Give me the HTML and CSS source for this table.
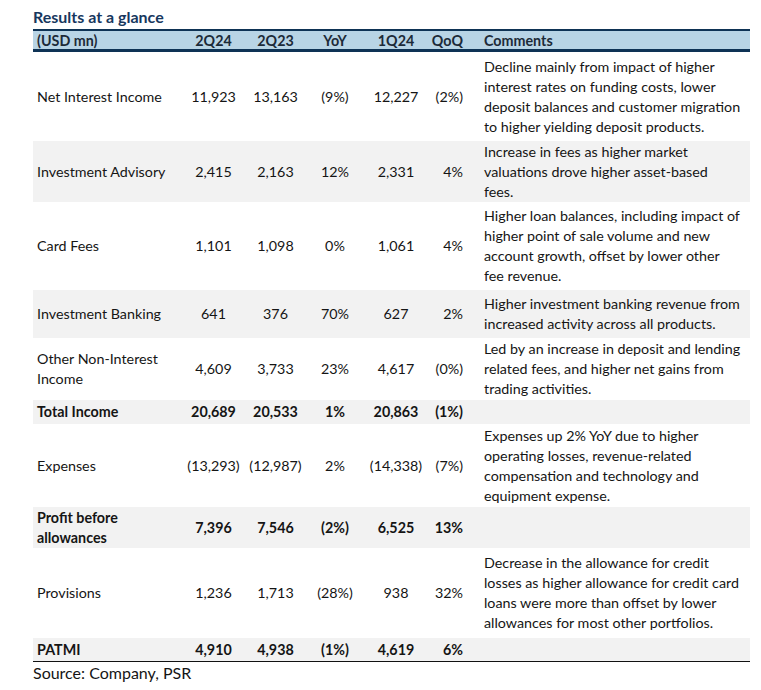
FILE: index.html
```html
<!DOCTYPE html>
<html lang="en">
<head>
<meta charset="utf-8">
<title>Results at a glance</title>
<link rel="stylesheet" href="styles.css">
</head>
<body>
<div class="wrap">
  <div class="title">Results at a glance</div>
  <table class="results">
    <colgroup>
      <col class="c-label"><col class="c-a"><col class="c-b"><col class="c-yoy"><col class="c-c"><col class="c-qoq"><col class="c-com">
    </colgroup>
    <thead>
      <tr>
        <th class="label">(USD mn)</th>
        <th class="num">2Q24</th>
        <th class="num">2Q23</th>
        <th class="num">YoY</th>
        <th class="num">1Q24</th>
        <th class="qoq">QoQ</th>
        <th class="com">Comments</th>
      </tr>
    </thead>
    <tbody>
      <tr class="h-nii">
        <td class="label">Net Interest Income</td>
        <td class="num">11,923</td><td class="num">13,163</td><td class="num">(9%)</td><td class="num">12,227</td><td class="qoq">(2%)</td>
        <td class="com">Decline mainly from impact of higher<br>interest rates on funding costs, lower<br>deposit balances and customer migration<br>to higher yielding deposit products.</td>
      </tr>
      <tr class="h-ia shade">
        <td class="label">Investment Advisory</td>
        <td class="num">2,415</td><td class="num">2,163</td><td class="num">12%</td><td class="num">2,331</td><td class="qoq">4%</td>
        <td class="com">Increase in fees as higher market<br>valuations drove higher asset-based<br>fees.</td>
      </tr>
      <tr class="h-cf">
        <td class="label">Card Fees</td>
        <td class="num">1,101</td><td class="num">1,098</td><td class="num">0%</td><td class="num">1,061</td><td class="qoq">4%</td>
        <td class="com">Higher loan balances, including impact of<br>higher point of sale volume and new<br>account growth, offset by lower other<br>fee revenue.</td>
      </tr>
      <tr class="h-ib shade">
        <td class="label">Investment Banking</td>
        <td class="num">641</td><td class="num">376</td><td class="num">70%</td><td class="num">627</td><td class="qoq">2%</td>
        <td class="com">Higher investment banking revenue from<br>increased activity across all products.</td>
      </tr>
      <tr class="h-oth">
        <td class="label">Other Non-Interest<br>Income</td>
        <td class="num">4,609</td><td class="num">3,733</td><td class="num">23%</td><td class="num">4,617</td><td class="qoq">(0%)</td>
        <td class="com">Led by an increase in deposit and lending<br>related fees, and higher net gains from<br>trading activities.</td>
      </tr>
      <tr class="h-tot shade bold">
        <td class="label">Total Income</td>
        <td class="num">20,689</td><td class="num">20,533</td><td class="num">1%</td><td class="num">20,863</td><td class="qoq">(1%)</td>
        <td class="com"></td>
      </tr>
      <tr class="h-exp">
        <td class="label">Expenses</td>
        <td class="num">(13,293)</td><td class="num">(12,987)</td><td class="num">2%</td><td class="num">(14,338)</td><td class="qoq">(7%)</td>
        <td class="com">Expenses up 2% YoY due to higher<br>operating losses, revenue-related<br>compensation and technology and<br>equipment expense.</td>
      </tr>
      <tr class="h-pba shade bold">
        <td class="label">Profit before<br>allowances</td>
        <td class="num">7,396</td><td class="num">7,546</td><td class="num">(2%)</td><td class="num">6,525</td><td class="qoq">13%</td>
        <td class="com"></td>
      </tr>
      <tr class="h-prov">
        <td class="label">Provisions</td>
        <td class="num">1,236</td><td class="num">1,713</td><td class="num">(28%)</td><td class="num">938</td><td class="qoq">32%</td>
        <td class="com">Decrease in the allowance for credit<br>losses as higher allowance for credit card<br>loans were more than offset by lower<br>allowances for most other portfolios.</td>
      </tr>
      <tr class="h-pat shade bold last">
        <td class="label">PATMI</td>
        <td class="num">4,910</td><td class="num">4,938</td><td class="num">(1%)</td><td class="num">4,619</td><td class="qoq">6%</td>
        <td class="com"></td>
      </tr>
    </tbody>
  </table>
  <div class="source">Source: Company, PSR</div>
</div>
</body>
</html>
```

FILE: styles.css
```css
html, body {
  margin: 0;
  padding: 0;
  background: #ffffff;
}

body {
  font-family: Lato, "Open Sans", "Liberation Sans", sans-serif;
  color: #151515;
  width: 761px;
  height: 690px;
  overflow: hidden;
}

.wrap {
  padding-left: 33px;
}

.title {
  padding-top: 6px;
  height: 22px;
  line-height: 22px;
  margin-bottom: 1px;
  font-size: 16px;
  font-weight: 700;
  color: #17375e;
}

.results {
  border-collapse: collapse;
  table-layout: fixed;
  width: 717px;
  font-size: 14.3px;
}

.c-label { width: 152px; }
.c-a { width: 57px; }
.c-b { width: 67px; }
.c-yoy { width: 52px; }
.c-c { width: 70px; }
.c-qoq { width: 37px; }
.c-com { width: 282px; }

.results th,
.results td {
  padding: 0;
  vertical-align: middle;
  white-space: nowrap;
  line-height: 20px;
}

.results thead tr {
  background: #b8d4e5;
  border-top: 2px solid #0e3355;
  border-bottom: 3px solid #0e3355;
}

.results th {
  font-weight: 700;
  color: #1c2a38;
  height: 16px;
  padding-top: 2px;
  line-height: 16px;
}

.label {
  text-align: left;
  padding-left: 4px !important;
}

.num {
  text-align: center;
}

.qoq {
  text-align: right;
  padding-right: 5px !important;
}

.com {
  text-align: left;
  padding-left: 16px !important;
}

.shade {
  background: #f2f2f2;
}

.bold td {
  font-weight: 700;
}

.last {
  border-bottom: 1px solid #111;
}

.h-nii td { height: 89px; }
.h-ia td { height: 61px; }
.h-cf td { height: 88px; }
.h-ib td { height: 48px; }
.h-oth td { height: 62px; }
.h-tot td { height: 24px; }
.h-exp td { height: 83px; }
.h-pba td { height: 41px; }
.h-prov td { height: 90px; }
.h-pat td { height: 23px; }

.source {
  font-size: 16px;
  line-height: 22px;
  color: #151515;
}
```
